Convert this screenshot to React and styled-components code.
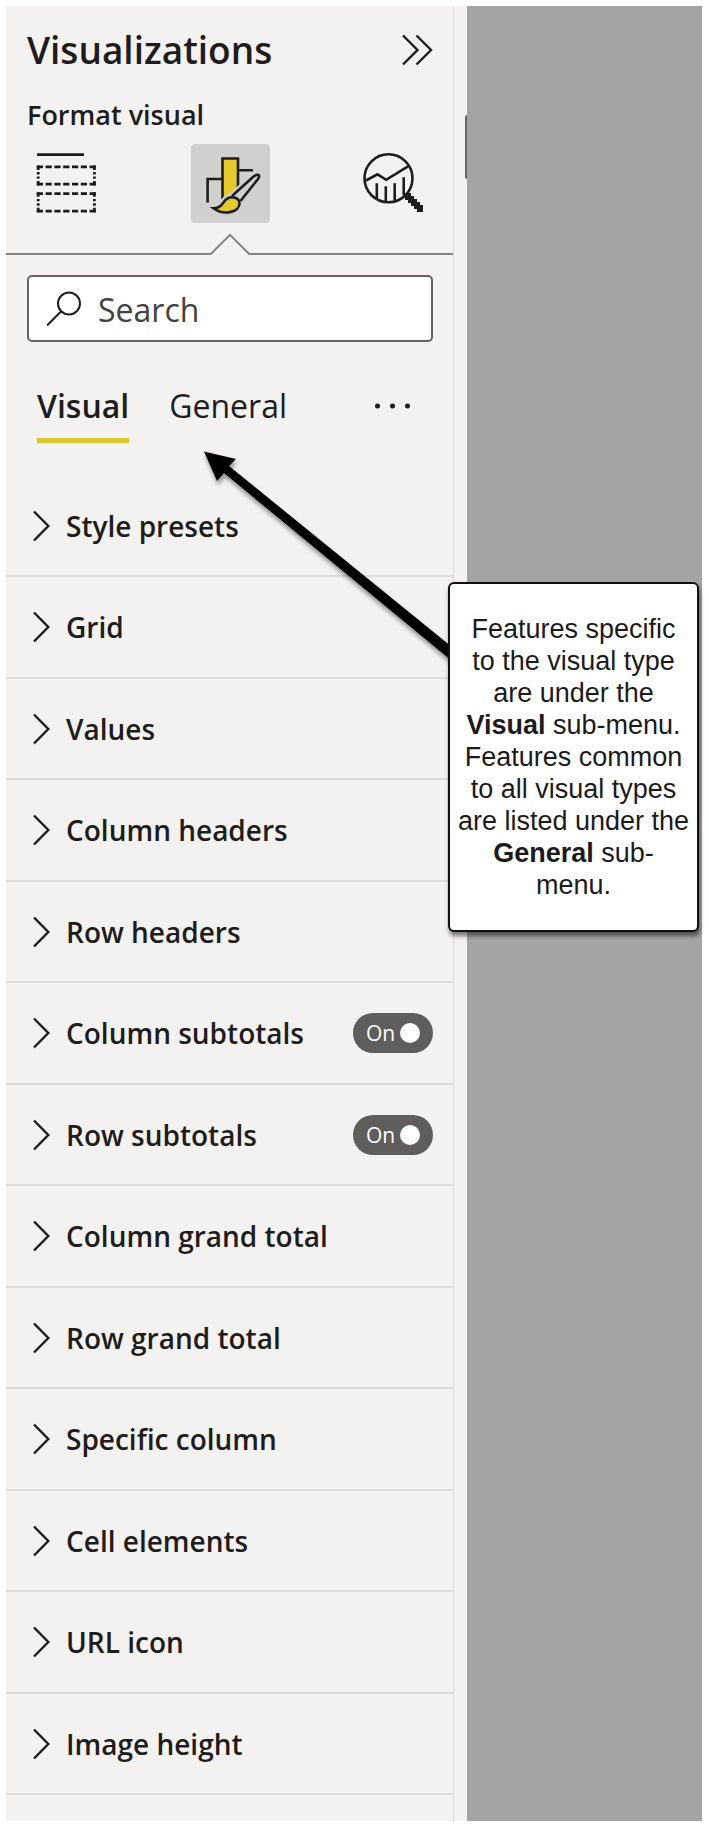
import React, { useState } from "react";
import styled, { createGlobalStyle } from "styled-components";

const ink = "#1f1d1c";
const surface = "#f3f2f1";
const line = "#dcdbda";

const GlobalStyle = createGlobalStyle`
  *, *::before, *::after { box-sizing: border-box; }
  body {
    margin: 0;
    background: #fff;
    color: ${ink};
    font-family: "Open Sans", "Noto Sans", sans-serif;
  }
  button {
    margin: 0;
    padding: 0;
    border: 0;
    background: none;
    color: inherit;
    font: inherit;
    text-align: left;
    cursor: pointer;
  }
  svg { display: block; flex: none; }
  h1, h2, p, ul { margin: 0; padding: 0; }
`;

const Shell = styled.div`
  position: relative;
  display: flex;
  padding: 6px 7px 7px 6px;
`;

const Pane = styled.aside`
  flex: 0 0 448px;
  min-width: 0;
  padding-bottom: 26px;
  background: ${surface};
  border-right: 1px solid ${line};
`;

const Gutter = styled.div`
  flex: 0 0 13px;
  display: flex;
  justify-content: flex-end;
  padding-top: 109px;
  background: ${surface};
`;

const Handle = styled.div`
  width: 2px;
  height: 64px;
  border-radius: 2px 0 0 2px;
  background: #666;
`;

const Canvas = styled.main`
  flex: 1;
  background: #a4a4a4;
`;

const Header = styled.header`
  padding: 20px 20px 0 21px;
`;

const TitleRow = styled.div`
  display: flex;
  align-items: center;
  justify-content: space-between;
`;

const Title = styled.h1`
  font-size: 37px;
  line-height: 48px;
  font-weight: 600;
`;

const Subtitle = styled.h2`
  margin-top: 23px;
  font-size: 27px;
  line-height: 36px;
  font-weight: 600;
`;

const ModeBar = styled.div`
  display: flex;
  justify-content: space-between;
  margin-top: 11px;
`;

const ModeButton = styled.button`
  width: 79px;
  height: 79px;
  border-radius: 4px;
  background: ${(p) => (p.$active ? "#d1d0cf" : "transparent")};
`;

const Divider = styled.div`
  display: flex;
  align-items: flex-end;
  margin-top: 10px;
`;

const Rule = styled.div`
  flex: 1;
  height: 2px;
  background: #858483;
`;

const SearchBox = styled.label`
  display: flex;
  align-items: center;
  gap: 16px;
  height: 67px;
  margin: 20px 20px 0 21px;
  padding: 0 16px 0 18px;
  border: 2px solid #636261;
  border-radius: 5px;
  background: #fff;
`;

const SearchInput = styled.input`
  flex: 1;
  width: 100%;
  min-width: 0;
  padding: 2px 0 0;
  border: 0;
  outline: 0;
  background: transparent;
  color: ${ink};
  font: 400 32px/44px "Open Sans", "Noto Sans", sans-serif;
  &::placeholder { color: #444241; opacity: 1; }
`;

const TabBar = styled.div`
  display: flex;
  align-items: flex-start;
  gap: 40px;
  padding: 42px 42px 0 31px;
`;

const Tab = styled.button`
  padding-bottom: 10px;
  border-bottom: 5px solid ${(p) => (p.$active ? "#dcc62c" : "transparent")};
  font-size: 32px;
  line-height: 44px;
  font-weight: ${(p) => (p.$active ? 600 : 400)};
`;

const MoreButton = styled.button`
  display: flex;
  align-items: center;
  height: 44px;
  margin-left: auto;
`;

const Sections = styled.ul`
  display: grid;
  grid-auto-rows: 101px 102px;
  margin-top: 33px;
  list-style: none;
`;

const Section = styled.li`
  display: flex;
  align-items: center;
  padding: 0 20px 0 27px;
  border-bottom: 2px solid ${line};
`;

const SectionButton = styled.button`
  flex: 1;
  display: flex;
  align-items: center;
  gap: 16px;
  font-size: 28px;
  line-height: 36px;
  font-weight: 600;
`;

const Switch = styled.label`
  position: relative;
  display: flex;
  align-items: center;
  justify-content: space-between;
  width: 80px;
  height: 40px;
  padding: 0 13px;
  border-radius: 20px;
  background: #5f5e5c;
  color: #fff;
  font-size: 21px;
  line-height: 28px;
  cursor: pointer;
`;

const SwitchInput = styled.input`
  appearance: none;
  position: absolute;
  inset: 0;
  margin: 0;
  border-radius: 20px;
  cursor: pointer;
`;

const Knob = styled.span`
  width: 20px;
  height: 20px;
  border-radius: 50%;
  background: #fff;
`;

const Arrow = styled.svg`
  position: absolute;
  left: 196px;
  top: 444px;
  pointer-events: none;
  filter: drop-shadow(1px 4px 2px rgba(0, 0, 0, 0.4));
`;

const Callout = styled.p`
  position: absolute;
  left: 448px;
  top: 582px;
  width: 251px;
  padding: 29px 0;
  border: 2px solid #111;
  border-radius: 6px;
  background: #fff;
  box-shadow: 1px 4px 4px rgba(0, 0, 0, 0.5);
  color: #1c1a1c;
  font: 400 27px/32px "Liberation Sans", Arial, sans-serif;
  text-align: center;
  white-space: nowrap;
`;

const Chevron = () => (
  <svg width="17" height="32" viewBox="0 0 17 32" fill="none" stroke={ink} strokeWidth="2.4" aria-hidden="true">
    <path d="M1 1.5 15.3 16 1 30.5" />
  </svg>
);

const FieldsIcon = () => (
  <svg width="79" height="79" viewBox="0 0 79 79" fill="none" stroke={ink} strokeWidth="2.8" aria-hidden="true">
    <path d="M10 10.700h47" />
    <path d="M9.800 22.800h59M9.800 40.200h59M9.800 49.600h59M9.800 67.200h59" strokeDasharray="6.200 2.600" />
    <path d="M11.200 21.400v20M67.400 21.400v20M11.200 48.300v20M67.400 48.300v20" strokeDasharray="4.500 2.100 2.400 2 2.400 2.100 4.500 20" />
  </svg>
);

const FormatIcon = () => (
  <svg width="79" height="79" viewBox="0 0 79 79" fill="none" stroke={ink} strokeWidth="2.6" aria-hidden="true">
    <path d="M31.500 55V14.500h15.500v32" fill="#e3c92d" />
    <path d="M16.600 58.500V35h15M47 26.300h15" />
    <path d="M22 64c6 0 9-3 11-6 2-4 5-5 8-6L62 33c5-4 8-2 5 2L49 56c1 12-16 18-27 8z" fill="#d1d0cf" stroke="#d1d0cf" strokeWidth="7" />
    <path d="M41 52 62 33c5-4 8-2 5 2L49.500 57" fill="#d1d0cf" />
    <path d="M22.500 64.200c6 0 8-3 10.500-6.500 5-7 15-5 15.500 1.500.500 8.500-15 13-26 5z" fill="#e3c92d" />
  </svg>
);

const AnalyticsIcon = () => (
  <svg width="79" height="79" viewBox="0 0 79 79" fill="none" stroke={ink} strokeWidth="2.6" aria-hidden="true">
    <circle cx="34.500" cy="34.300" r="24" />
    <path d="M12 36.500 23.500 30.300l8.700 5.500L54 22.300M22.800 39.300V54M31.800 42.300v15.500M40.700 39.300v17.500M49.700 33.300v18" />
    <path d="M54 49h3v3h3v3h3v3h3v3h3v7h-6v-3h-3v-3h-3v-3h-3v-3h-3v-5z" fill={ink} stroke="none" />
  </svg>
);

const SECTIONS = [
  "Style presets",
  "Grid",
  "Values",
  "Column headers",
  "Row headers",
  "Column subtotals",
  "Row subtotals",
  "Column grand total",
  "Row grand total",
  "Specific column",
  "Cell elements",
  "URL icon",
  "Image height",
];

const SWITCHED = ["Column subtotals", "Row subtotals"];

export default function App() {
  const [tab, setTab] = useState("Visual");
  return (
    <>
      <GlobalStyle />
      <Shell>
        <Pane>
          <Header>
            <TitleRow>
              <Title>Visualizations</Title>
              <button type="button" aria-label="Collapse pane">
                <svg width="31" height="32" viewBox="0 0 31 32" fill="none" stroke={ink} strokeWidth="2.4">
                  <path d="M1 1.5 15.5 16 1 30.5M14.5 1.5 29 16 14.5 30.5" />
                </svg>
              </button>
            </TitleRow>
            <Subtitle>Format visual</Subtitle>
            <ModeBar>
              <ModeButton type="button" aria-label="Build visual"><FieldsIcon /></ModeButton>
              <ModeButton type="button" aria-label="Format visual" $active><FormatIcon /></ModeButton>
              <ModeButton type="button" aria-label="Analytics"><AnalyticsIcon /></ModeButton>
            </ModeBar>
          </Header>
          <Divider>
            <Rule />
            <svg width="40" height="22" viewBox="0 0 40 22" fill="none" stroke="#858483" strokeWidth="2" aria-hidden="true">
              <path d="M0 21h.8L20 1.8 39.200 21h.8" />
            </svg>
            <Rule />
          </Divider>
          <SearchBox>
            <svg width="35" height="35" viewBox="0 0 35 35" fill="none" stroke={ink} strokeWidth="2" aria-hidden="true">
              <circle cx="22" cy="12.500" r="11" />
              <path d="M14.200 20.300 0 34.500" />
            </svg>
            <SearchInput type="text" placeholder="Search" aria-label="Search" />
          </SearchBox>
          <TabBar>
            {["Visual", "General"].map((name) => (
              <Tab key={name} type="button" $active={tab === name} onClick={() => setTab(name)}>
                {name}
              </Tab>
            ))}
            <MoreButton type="button" aria-label="More options">
              <svg width="37" height="6" viewBox="0 0 37 6" fill={ink}>
                <circle cx="3.500" cy="3" r="2.500" />
                <circle cx="18.500" cy="3" r="2.500" />
                <circle cx="33.500" cy="3" r="2.500" />
              </svg>
            </MoreButton>
          </TabBar>
          <Sections>
            {SECTIONS.map((name) => (
              <Section key={name}>
                <SectionButton type="button">
                  <Chevron />
                  {name}
                </SectionButton>
                {SWITCHED.includes(name) && (
                  <Switch>
                    <SwitchInput type="checkbox" role="switch" defaultChecked aria-label={name} />
                    On
                    <Knob />
                  </Switch>
                )}
              </Section>
            ))}
          </Sections>
        </Pane>
        <Gutter>
          <Handle />
        </Gutter>
        <Canvas />
        <Arrow width="260" height="230" viewBox="196 444 260 230" aria-hidden="true">
          <path d="M204 451.500 236 459l-7 7L452 647v14L224 473l-7 8z" fill="#000" />
        </Arrow>
        <Callout>
          Features specific
          <br />
          to the visual type
          <br />
          are under the
          <br />
          <b>Visual</b> sub-menu.
          <br />
          Features common
          <br />
          to all visual types
          <br />
          are listed under the
          <br />
          <b>General</b> sub-
          <br />
          menu.
        </Callout>
      </Shell>
    </>
  );
}
